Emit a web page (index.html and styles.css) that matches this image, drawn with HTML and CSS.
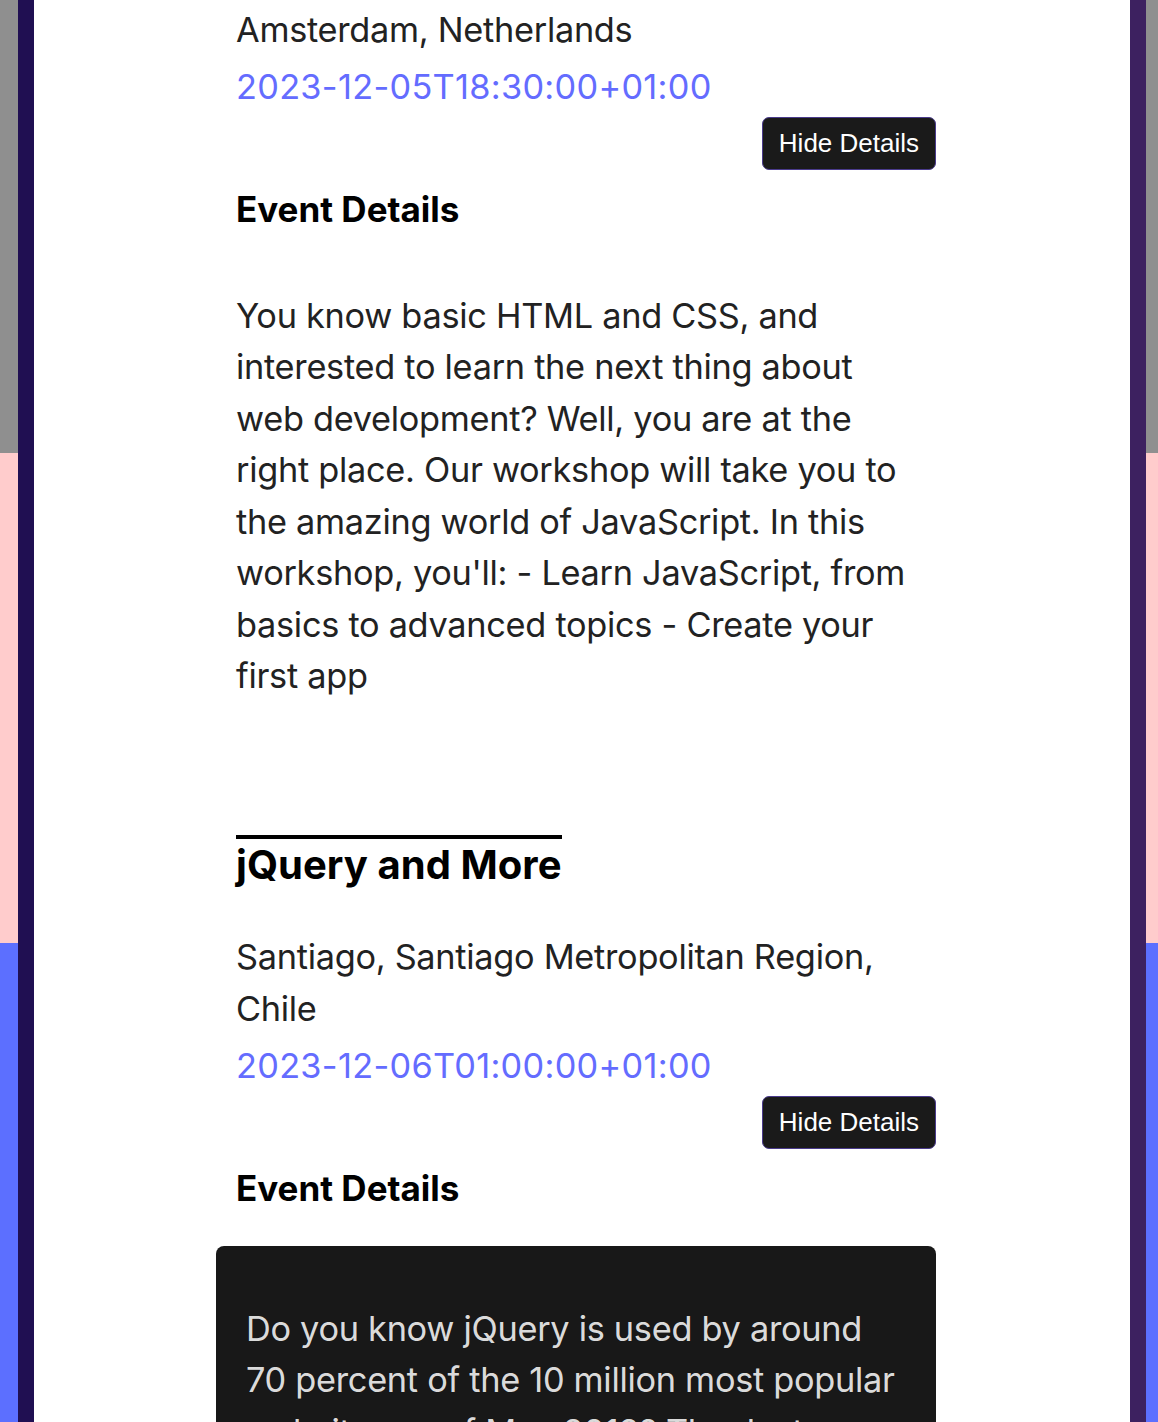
FILE: index.html
```html
<!DOCTYPE html>
<html lang="en">
<head>
<meta charset="utf-8">
<title>Events</title>
<link rel="stylesheet" href="styles.css">
</head>
<body>
<div class="frame">
  <div class="strip strip-left"></div>
  <div class="rail rail-left"></div>
  <main class="main">
    <article class="event">
      <p class="location">Amsterdam, Netherlands</p>
      <p class="date">2023-12-05T18:30:00+01:00</p>
      <div class="actions"><button class="toggle">Hide Details</button></div>
      <h3 class="details-title">Event Details</h3>
      <p class="description">You know basic HTML and CSS, and interested to learn the next thing about web development? Well, you are at the right place. Our workshop will take you to the amazing world of JavaScript. In this workshop, you'll: - Learn JavaScript, from basics to advanced topics - Create your first app</p>
    </article>
    <article class="event event-next">
      <h2 class="event-title">jQuery and More</h2>
      <p class="location">Santiago, Santiago Metropolitan Region, Chile</p>
      <p class="date">2023-12-06T01:00:00+01:00</p>
      <div class="actions"><button class="toggle">Hide Details</button></div>
      <h3 class="details-title">Event Details</h3>
      <div class="details-box">
        <p class="description dark">Do you know jQuery is used by around 70 percent of the 10 million most popular websites as of May 2019? Thanks to jQuery, we can write less and do more.</p>
      </div>
    </article>
  </main>
  <div class="rail rail-right"></div>
  <div class="strip strip-right"></div>
</div>
</body>
</html>
```
FILE: styles.css
```css
html, body {
  margin: 0;
  padding: 0;
  height: 1422px;
  overflow: hidden;
}
body {
  font-family: Inter, "Noto Sans", sans-serif;
  color: #222;
  background: #fff;
}
.frame {
  display: flex;
  height: 1422px;
}
.strip {
  background: linear-gradient(to bottom, #8f8f8f 0, #8f8f8f 453px, #ffcccc 453px, #ffcccc 943px, #5c6fff 943px, #5c6fff 100%);
}
.strip-left { width: 18px; }
.strip-right { width: 12px; }
.rail { width: 16px; }
.rail-left { background: #200f52; }
.rail-right { background: #3d2160; }
.main {
  flex: 1;
  background: #fff;
  padding-left: 182px;
  overflow: hidden;
}
.event {
  width: 680px;
  padding: 0 20px;
}
p { margin: 0; }
.location {
  font-size: 34.3px;
  line-height: 1.5;
  letter-spacing: -0.28px;
  padding-top: 4px;
}
.date {
  font-size: 34.3px;
  line-height: 1.5;
  letter-spacing: 0.3px;
  color: #646cff;
  margin-top: 6px;
}
.actions {
  display: flex;
  justify-content: flex-end;
  margin: 4px -20px 0 0;
}
.toggle {
  font-family: "Liberation Sans", Arial, sans-serif;
  font-size: 26px;
  color: #fff;
  background: #1a1a1a;
  border: 1px solid #4a3b8c;
  border-radius: 7px;
  height: 53px;
  padding: 0 16px;
}
.details-title {
  font-size: 35px;
  font-weight: 700;
  color: #000;
  margin: 18px 0 0;
  line-height: 1.2;
}
.description {
  font-size: 34.3px;
  line-height: 1.5;
  letter-spacing: -0.28px;
  margin-top: 60px;
}
.event-next {
  margin-top: 134px;
}
.event-title {
  display: inline-block;
  margin: 0;
  font-size: 40px;
  font-weight: 700;
  letter-spacing: 0.05px;
  color: #000;
  border-top: 4px solid #000;
  line-height: 1.2;
  padding-top: 2px;
}
.event-next .location {
  margin-top: 42px;
  padding-top: 0;
}
.details-box {
  margin: 37px -20px 0;
  background: #181818;
  border-radius: 8px 8px 0 0;
  padding: 57px 30px 40px;
}
.description.dark {
  margin-top: 0;
  color: rgba(255, 255, 255, 0.87);
}
```
